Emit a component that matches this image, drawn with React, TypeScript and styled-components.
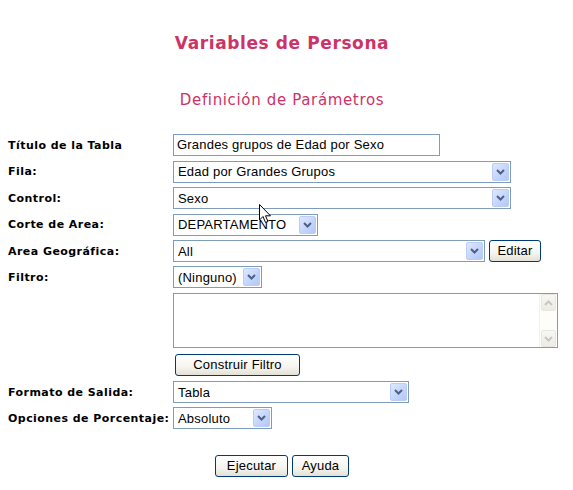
import React from "react";
import styled, { createGlobalStyle } from "styled-components";

const Global = createGlobalStyle`
  html, body { margin: 0; padding: 0; background: #ffffff; }
  body { font-family: "DejaVu Sans", Verdana, sans-serif; }
`;

const Page = styled.div`
  position: relative;
  width: 564px;
  padding-top: 33px;
`;

const Title = styled.h1`
  margin: 0;
  text-align: center;
  font-family: "DejaVu Sans", Verdana, sans-serif;
  font-size: 17px;
  font-weight: bold;
  letter-spacing: 0.6px;
  color: #cc3366;
  line-height: 20px;
`;

const Subtitle = styled.h2`
  margin: 38px 0 0;
  text-align: center;
  font-family: "DejaVu Sans", Verdana, sans-serif;
  font-size: 15px;
  font-weight: normal;
  letter-spacing: 0.65px;
  color: #cc3366;
  line-height: 18px;
`;

const Form = styled.div`
  display: grid;
  grid-template-columns: 165px 1fr;
  padding: 23px 0 0 8px;
  align-items: center;
`;

const Label = styled.div<{ $h?: number; $mt?: number }>`
  height: ${(p) => p.$h ?? 26}px;
  margin-top: ${(p) => p.$mt ?? 0}px;
  display: flex;
  align-items: center;
  font-family: "DejaVu Sans", Verdana, sans-serif;
  font-size: 11px;
  font-weight: bold;
  letter-spacing: 0.45px;
  color: #000;
  white-space: nowrap;
`;

const Cell = styled.div<{ $h?: number; $mt?: number }>`
  height: ${(p) => p.$h ?? 26}px;
  margin-top: ${(p) => p.$mt ?? 0}px;
  display: flex;
  align-items: center;
  gap: 4px;
`;

const TextInput = styled.div<{ $w: number }>`
  box-sizing: border-box;
  width: ${(p) => p.$w}px;
  height: 22px;
  border: 1px solid #7f9db9;
  background: #fff;
  font-family: "Liberation Sans", Arial, sans-serif;
  font-size: 13px;
  letter-spacing: 0.2px;
  line-height: 20px;
  padding-left: 3px;
  color: #000;
  white-space: nowrap;
  overflow: hidden;
`;

const SelectBox = styled.div<{ $w: number }>`
  box-sizing: border-box;
  width: ${(p) => p.$w}px;
  height: 22px;
  border: 1px solid #7f9db9;
  background: #fff;
  display: flex;
  align-items: center;
  justify-content: space-between;
  padding: 1px;
  font-family: "Liberation Sans", Arial, sans-serif;
  font-size: 13px;
  letter-spacing: 0.2px;
  color: #000;
`;

const SelectText = styled.span`
  padding-left: 3px;
  white-space: nowrap;
  overflow: hidden;
`;

const ArrowBtn = styled.div`
  flex: none;
  box-sizing: border-box;
  width: 17px;
  height: 18px;
  border-radius: 2px;
  border: 1px solid #bacdf6;
  background: linear-gradient(135deg, #dfe8fe 0%, #c4d5fc 55%, #b4c7f5 100%);
  display: flex;
  align-items: center;
  justify-content: center;
`;

const TextArea = styled.div`
  box-sizing: border-box;
  width: 385px;
  height: 55px;
  border: 1px solid #7f9db9;
  background: #fff;
  display: flex;
  justify-content: flex-end;
`;

const ScrollBar = styled.div`
  width: 17px;
  background: #fdfdf9;
  border-left: 1px solid #f3f2ea;
  display: flex;
  flex-direction: column;
  justify-content: space-between;
`;

const ScrollBtn = styled.div`
  box-sizing: border-box;
  height: 17px;
  margin: 0 1px;
  border: 1px solid #e8e7df;
  border-radius: 2px;
  background: linear-gradient(180deg, #f7f7f3, #ecebe5);
  display: flex;
  align-items: center;
  justify-content: center;
`;

const Button = styled.button<{ $w: number; $ml?: number }>`
  box-sizing: border-box;
  width: ${(p) => p.$w}px;
  height: 22px;
  margin-left: ${(p) => p.$ml ?? 0}px;
  padding: 0;
  border: 1px solid #003c74;
  border-radius: 3px;
  background: linear-gradient(180deg, #ffffff 0%, #f5f4ef 60%, #e3e1d6 100%);
  font-family: "Liberation Sans", Arial, sans-serif;
  font-size: 13px;
  letter-spacing: 0.2px;
  color: #000;
  line-height: 18px;
`;

const Actions = styled.div`
  display: flex;
  justify-content: center;
  gap: 4px;
  margin-top: 24px;
`;

const Cursor = styled.svg`
  position: absolute;
  left: 259px;
  top: 204px;
`;

const Chevron = () => (
  <svg width="9" height="6" viewBox="0 0 9 6">
    <path d="M1 1 L4.5 4.5 L8 1" stroke="#4d6185" strokeWidth="2" fill="none" />
  </svg>
);

const Select = ({ w, value }: { w: number; value: string }) => (
  <SelectBox $w={w}>
    <SelectText>{value}</SelectText>
    <ArrowBtn>
      <Chevron />
    </ArrowBtn>
  </SelectBox>
);

export default function App() {
  return (
    <Page>
      <Global />
      <Title>Variables de Persona</Title>
      <Subtitle>Definición de Parámetros</Subtitle>
      <Form>
        <Label>Título de la Tabla</Label>
        <Cell>
          <TextInput $w={267}>Grandes grupos de Edad por Sexo</TextInput>
        </Cell>

        <Label $h={27}>Fila:</Label>
        <Cell $h={27}>
          <Select w={338} value="Edad por Grandes Grupos" />
        </Cell>

        <Label>Control:</Label>
        <Cell>
          <Select w={338} value="Sexo" />
        </Cell>

        <Label $h={27}>Corte de Area:</Label>
        <Cell $h={27}>
          <Select w={145} value="DEPARTAMENTO" />
        </Cell>

        <Label>Area Geográfica:</Label>
        <Cell>
          <Select w={312} value="All" />
          <Button $w={52}>Editar</Button>
        </Cell>

        <Label>Filtro:</Label>
        <Cell>
          <Select w={89} value="(Ninguno)" />
        </Cell>

        <div />
        <Cell $h={55} $mt={3}>
          <TextArea>
            <ScrollBar>
              <ScrollBtn>
                <svg width="9" height="6" viewBox="0 0 9 6">
                  <path d="M1 5 L4.5 1.5 L8 5" stroke="#c9c8c0" strokeWidth="2" fill="none" />
                </svg>
              </ScrollBtn>
              <ScrollBtn>
                <svg width="9" height="6" viewBox="0 0 9 6">
                  <path d="M1 1 L4.5 4.5 L8 1" stroke="#c9c8c0" strokeWidth="2" fill="none" />
                </svg>
              </ScrollBtn>
            </ScrollBar>
          </TextArea>
        </Cell>

        <div />
        <Cell $h={22} $mt={6}>
          <Button $w={125} $ml={2}>Construir Filtro</Button>
        </Cell>

        <Label $mt={3}>Formato de Salida:</Label>
        <Cell $mt={3}>
          <Select w={236} value="Tabla" />
        </Cell>

        <Label>Opciones de Porcentaje:</Label>
        <Cell>
          <Select w={99} value="Absoluto" />
        </Cell>
      </Form>
      <Actions>
        <Button $w={73}>Ejecutar</Button>
        <Button $w={57}>Ayuda</Button>
      </Actions>
      <Cursor width="13" height="20" viewBox="0 0 13 20">
        <path
          d="M0.5 0.5 L0.5 16 L4 12.5 L6.5 18.5 L9 17.5 L6.5 11.8 L11.5 11.8 Z"
          fill="#fff"
          stroke="#000"
          strokeWidth="1"
        />
      </Cursor>
    </Page>
  );
}
